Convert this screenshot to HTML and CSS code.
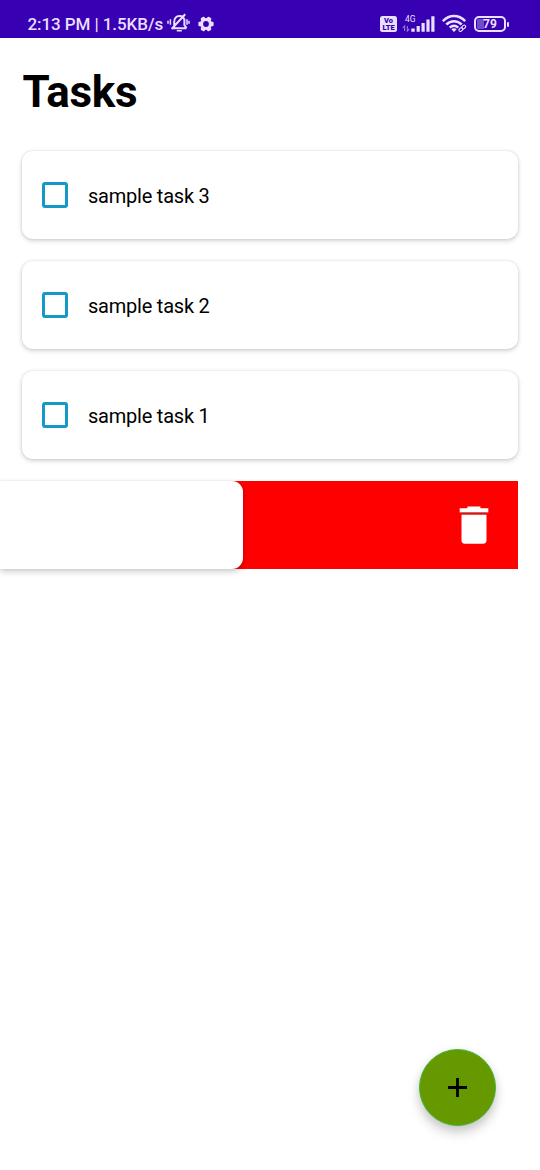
FILE: index.html
```html
<!DOCTYPE html>
<html lang="en">
<head>
<meta charset="utf-8">
<title>Tasks</title>
<link rel="stylesheet" href="styles.css">
</head>
<body>
<header class="status">
  <span class="clock">2:13 PM | 1.5KB/s</span>
  <svg class="mute" width="24" height="22" viewBox="0 0 24 22" fill="none" stroke="#eadfff" stroke-width="2">
    <path d="M5.5 16.2h14M7.2 15.7V10C7.2 6.4 9.2 4 12.5 4c2.4 0 4.2 1.5 4.9 3.6v5.6l2.2 2.8M4.6 17L18.2 2.2"/>
    <path d="M9.8 18.8h5M3.4 7.2v5.5M1 8.8v3M20 7.2v5.5M22 8.8v3" stroke-width="1.5"/>
  </svg>
  <svg class="gear" width="16" height="16" viewBox="0 0 16 16">
    <g fill="#eadfff"><rect x="5.8" y=".4" width="4.4" height="15.2" rx="1" transform="rotate(30 8 8)"/><rect x="5.8" y=".4" width="4.4" height="15.2" rx="1" transform="rotate(90 8 8)"/><rect x="5.8" y=".4" width="4.4" height="15.2" rx="1" transform="rotate(150 8 8)"/><circle cx="8" cy="8" r="6"/></g>
    <circle cx="8" cy="8" r="2.9" fill="#3700b3"/>
  </svg>
  <span class="volte"><span>Vo</span><span>LTE</span></span>
  <span class="cell">
    <span class="net">4G</span>
    <svg width="33" height="18" viewBox="0 0 33 18" fill="#eadfff">
      <path d="M9.3 13.5h3.4v3.2H9.3zM14.6 11h3.2v5.7h-3.2zM19.5 8h3.2v8.7h-3.2zM24.4 4.5h3.2v12.2h-3.2zM29.3 1.2h3.2v15.5h-3.2z"/>
      <path d="M2.6 16v-5L.8 12.9M5.4 11v5l1.8-2" fill="none" stroke="#9270dc" stroke-width="1.2"/>
    </svg>
  </span>
  <svg class="wifi" width="26" height="19" viewBox="0 0 26 19" fill="none" stroke="#eadfff">
    <path d="M.8 7.2C7.4.4 16.6.4 23.2 7.2M4.3 10.5c4.6-4.4 10.8-4.4 15.4 0M7.7 13.6c2.6-2.3 6-2.3 8.6 0" stroke-width="2.5"/>
    <path d="M9.3 15.2Q12 13.4 14.7 15.2L12 18z" fill="#eadfff" stroke="none"/>
    <g stroke="#3700b3" stroke-width="2.6"><rect x="16.7" y="14.1" width="4.4" height="2.8" rx="1.4" transform="rotate(-42 18.9 15.5)"/><rect x="19.5" y="11.6" width="4.4" height="2.8" rx="1.4" transform="rotate(-42 21.7 13)"/></g>
    <g stroke-width="1.1"><rect x="16.7" y="14.1" width="4.4" height="2.8" rx="1.4" transform="rotate(-42 18.9 15.5)"/><rect x="19.5" y="11.6" width="4.4" height="2.8" rx="1.4" transform="rotate(-42 21.7 13)"/></g>
  </svg>
  <span class="battery">79</span>
</header>
<main class="page">
  <h1 class="title">Tasks</h1>
  <ul class="list">
    <li class="card"><span class="box"></span><span class="label">sample task 3</span></li>
    <li class="card"><span class="box"></span><span class="label">sample task 2</span></li>
    <li class="card"><span class="box"></span><span class="label">sample task 1</span></li>
    <li class="swipe">
      <div class="swiped"></div>
      <div class="delete">
        <svg width="30" height="38" viewBox="0 0 30 38" fill="#fff"><path d="M8.4.6h13v1.6h7.9v4.4H.7V2.2h7.7z"/><path d="M2.5 8.5h25V34.3q0 3.4-3.4 3.4H5.9q-3.4 0-3.4-3.4z"/><path d="M1.5 6.6h27v1.9h-27z" fill="#c9201c"/></svg>
      </div>
    </li>
  </ul>
</main>
<button class="fab" aria-label="Add task">
  <svg width="20" height="20" viewBox="0 0 20 20"><path d="M9.5 0v19M0 9.5h19" stroke="#000" stroke-width="2.8"/></svg>
</button>
</body>
</html>
```
FILE: styles.css
```css
* { box-sizing: border-box; }

body {
  margin: 0;
  height: 1170px;
  overflow: hidden;
  background: #fff;
  color: #000;
  font-family: Roboto, "Liberation Sans", sans-serif;
}

.status {
  display: flex;
  align-items: flex-start;
  height: 38px;
  padding-left: 27.5px;
  background: #3700b3;
  color: #eadfff;
}

.clock {
  width: 139.5px;
  margin-top: 14px;
  font-size: 17px;
  font-weight: 500;
  line-height: 20px;
  letter-spacing: -0.08px;
  white-space: nowrap;
}

.mute { margin-top: 12px; }
.gear { margin: 16px 0 0 7px; }

.volte {
  display: flex;
  flex-direction: column;
  align-items: center;
  width: 17px;
  height: 16px;
  margin: 16px 0 0 166px;
  padding-top: 1px;
  border-radius: 2.5px;
  background: #eadfff;
  color: #3700b3;
  font-size: 7.5px;
  font-weight: 900;
}

.volte span {
  height: 7px;
  overflow: hidden;
  line-height: 7px;
}

.cell {
  display: flex;
  position: relative;
  margin: 15px 0 0 5px;
}

.net {
  position: absolute;
  left: 3px;
  top: -1.5px;
  font-size: 8.5px;
  line-height: 10px;
}

.wifi { margin: 14px 0 0 7px; }

.battery {
  position: relative;
  width: 32px;
  height: 16px;
  margin: 15.5px 0 0 6px;
  border: 2px solid #eadfff;
  border-radius: 5px;
  background: linear-gradient(#704bcb, #704bcb) 1px 1px / 7px 10px no-repeat;
  font-size: 12px;
  font-weight: 700;
  line-height: 12px;
  text-align: center;
}

.battery::after {
  content: "";
  position: absolute;
  top: 4px;
  right: -5px;
  width: 2px;
  height: 5px;
  border-radius: 1px;
  background: #eadfff;
}

.page { padding: 28px 22px 0; }

.title {
  margin: 0;
  font-size: 44px;
  font-weight: 700;
  line-height: 52px;
  letter-spacing: -0.3px;
  text-indent: 0.5px;
}

.list {
  display: flex;
  flex-direction: column;
  gap: 22px;
  margin: 33.4px 0 0;
  padding: 0;
  list-style: none;
}

.card {
  display: flex;
  align-items: center;
  height: 88px;
  padding-left: 20px;
  border-radius: 11px;
  background: #fff;
  box-shadow: 0 2px 5px rgba(0, 0, 0, 0.16), 0 0 3px rgba(0, 0, 0, 0.12);
}

.box {
  width: 26px;
  height: 26px;
  border: 3px solid #1498c8;
  border-radius: 3px;
}

.label {
  margin: 1px 0 0 20px;
  font-size: 20px;
  line-height: 24px;
  letter-spacing: -0.22px;
}

.swipe {
  display: flex;
  height: 88px;
  margin-left: -22px;
}

.swiped {
  position: relative;
  width: 242.5px;
  border-radius: 0 11px 11px 0;
  background: #fff;
  box-shadow: 0 3px 6px rgba(0, 0, 0, 0.18), 0 0 3px rgba(0, 0, 0, 0.1);
}

.delete {
  display: flex;
  flex: 1;
  align-items: center;
  justify-content: flex-end;
  margin-left: -11px;
  padding-right: 29px;
  background: #f00;
}

.fab {
  display: flex;
  position: absolute;
  left: 419px;
  top: 1049px;
  align-items: center;
  justify-content: center;
  width: 77px;
  height: 77px;
  padding: 0;
  border: 1px solid #42b436;
  border-radius: 50%;
  background: #690;
  box-shadow: 0 7px 12px rgba(0, 0, 0, 0.18), 0 2px 8px rgba(0, 0, 0, 0.08);
}
```
